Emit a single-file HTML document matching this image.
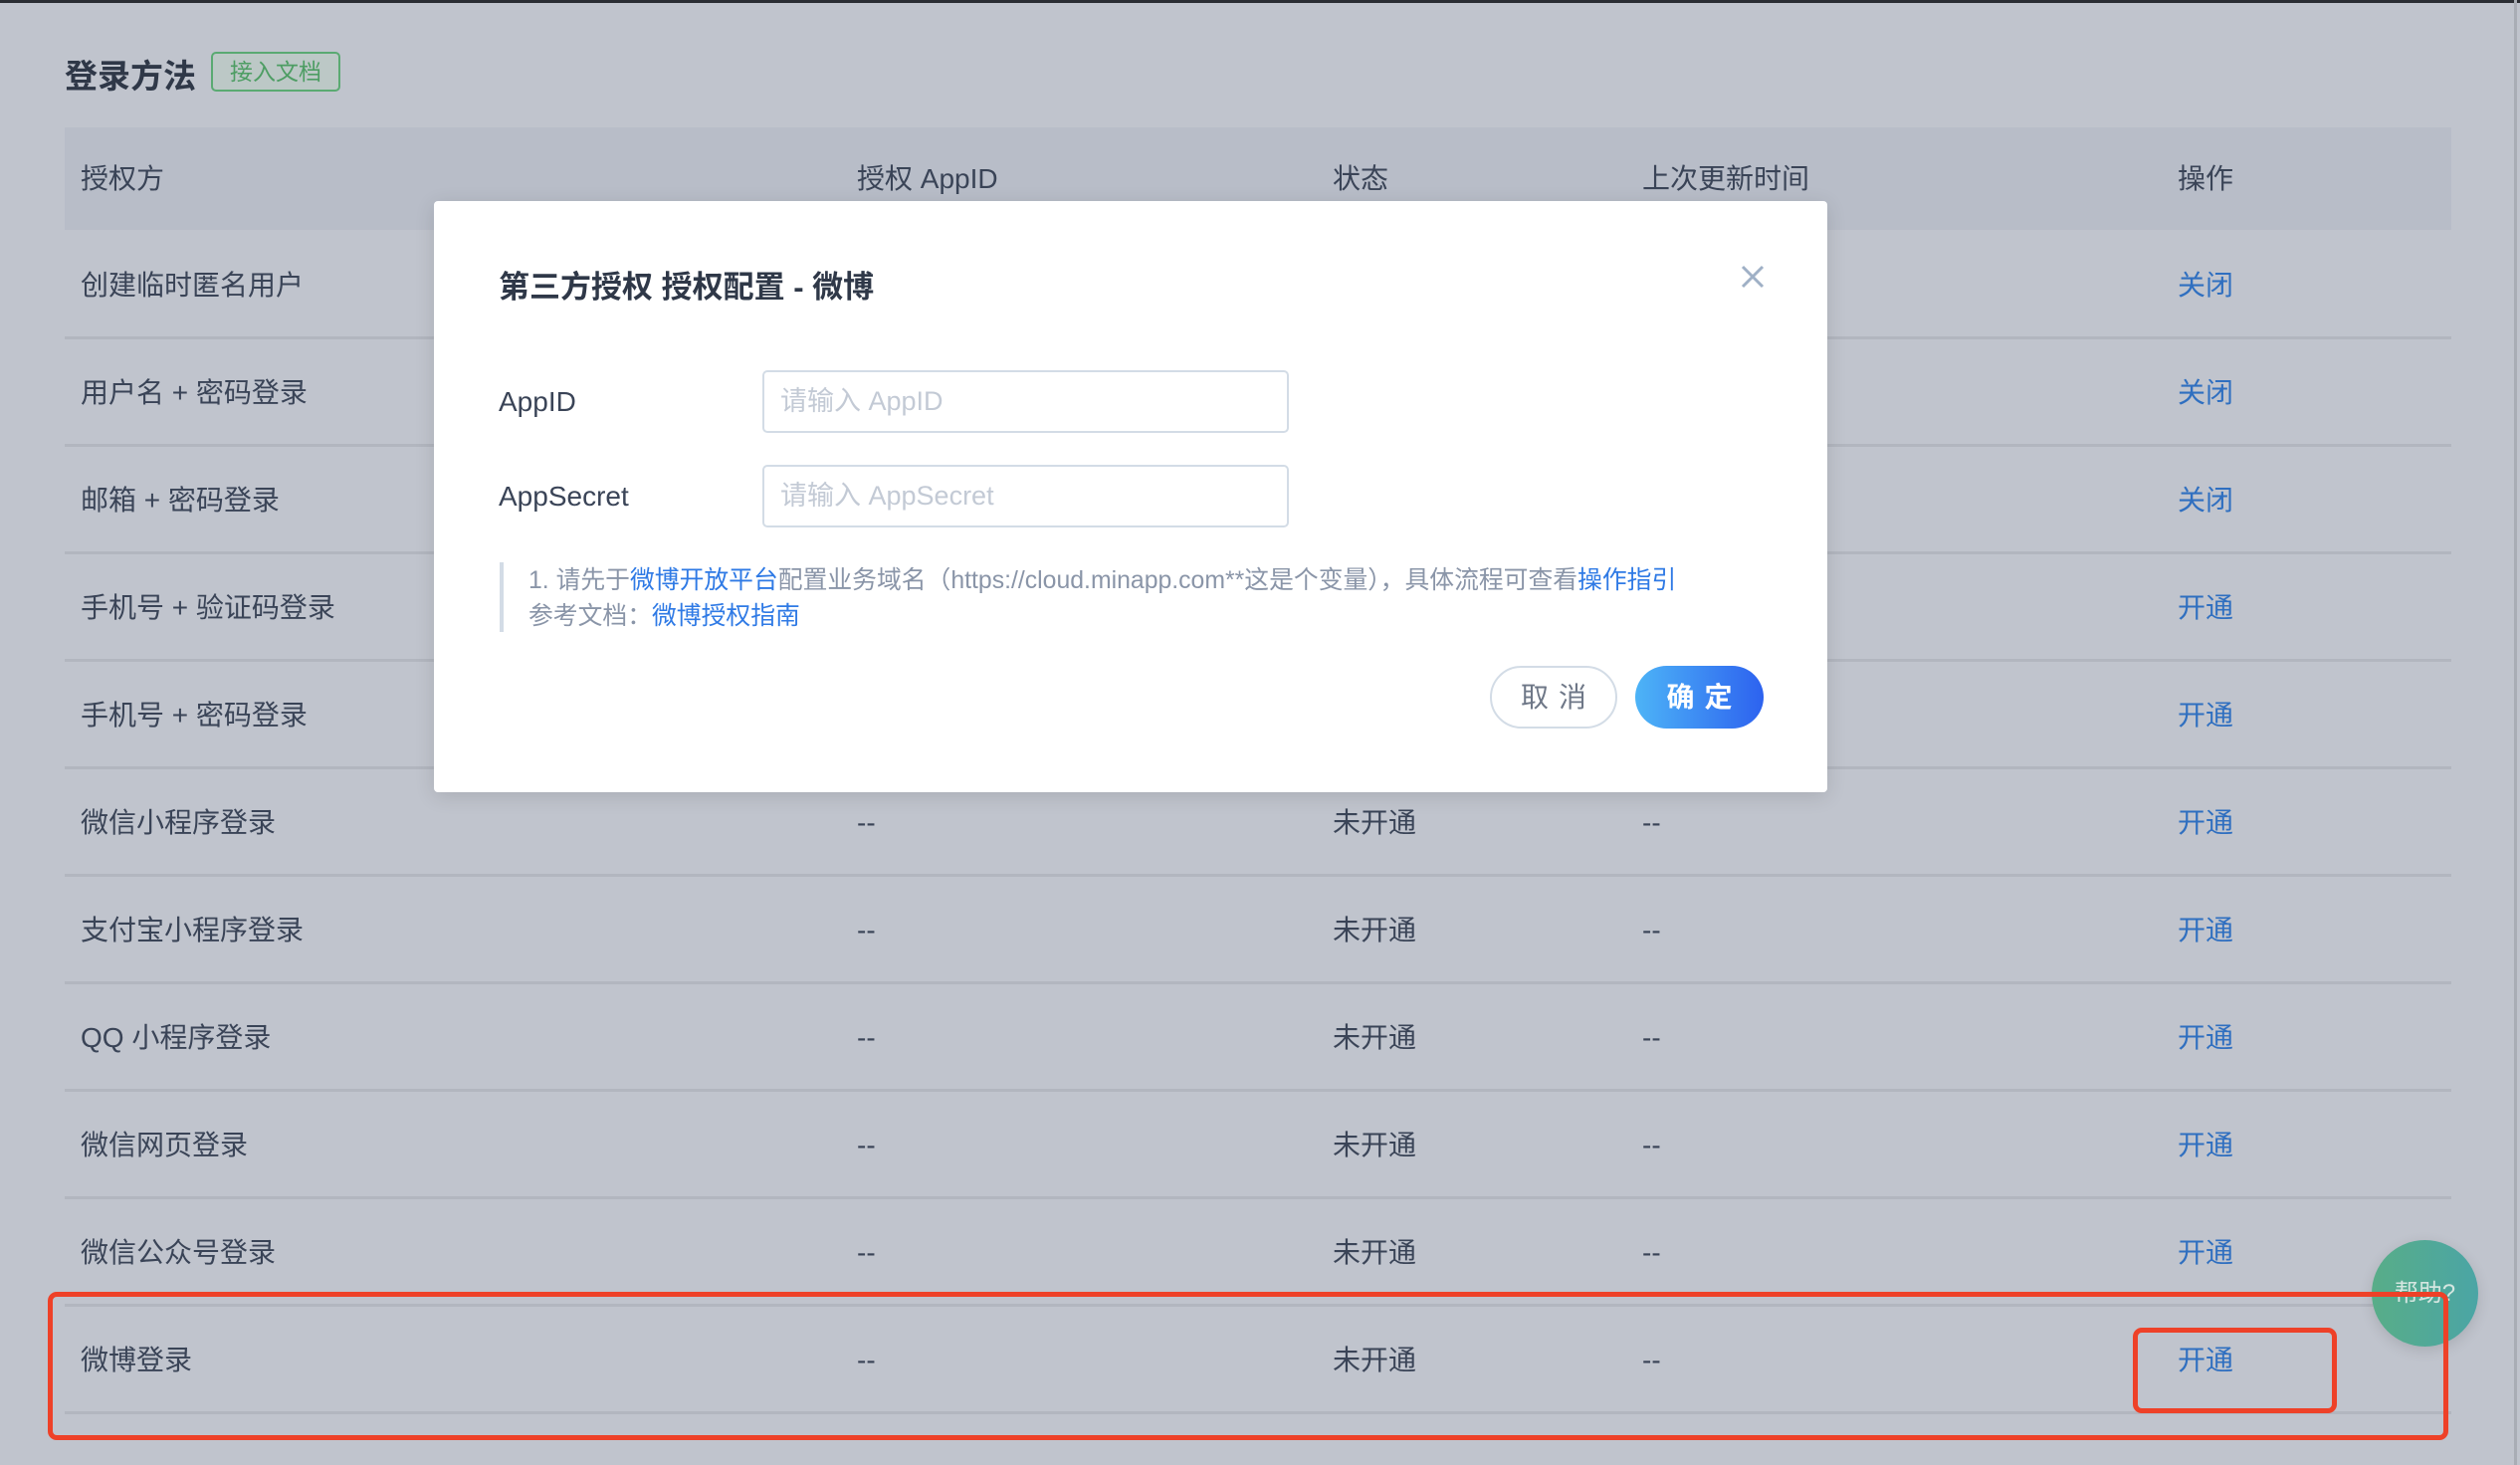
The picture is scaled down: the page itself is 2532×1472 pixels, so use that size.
<!DOCTYPE html>
<html><head><meta charset="utf-8"><style>
*{margin:0;padding:0;box-sizing:border-box}
body{width:2532px;height:1472px;background:#c0c4cd;position:relative;overflow:hidden;font-family:"Liberation Sans","Noto Sans CJK SC",sans-serif;color:#3a4457}
.abs{position:absolute}
.topbar{left:0;top:0;width:2532px;height:3px;background:#2a2d33}
.rline{left:2526px;top:0;width:3px;height:1472px;background:#a9adb5}
.title{left:65px;top:50px;font-size:33px;font-weight:bold;color:#2f3848}
.tag{left:212px;top:52px;width:130px;height:40px;border:2px solid #5aaa72;border-radius:5px;color:#4d9d63;font-size:23px;line-height:36px;text-align:center;background:#bcc8c6}
.head{left:65px;top:128px;width:2398px;height:103px;background:#b8bdc8}
.t{font-size:28px;line-height:32px;white-space:nowrap}
.line{left:65px;width:2398px;height:3px;background:#b2b6bf}
.link{color:#2f6fc0}
.modal{left:436px;top:202px;width:1400px;height:594px;background:#fff;border-radius:4px;box-shadow:0 4px 20px rgba(0,0,0,.12)}
.inp{width:529px;height:63px;border:2px solid #d3dce6;border-radius:5px;font-size:27px;color:#c3cad5;padding-left:16px;line-height:59px}
.btn{height:63px;border-radius:32px;font-size:28px;line-height:59px;text-align:center;letter-spacing:10px;text-indent:10px}
</style></head><body>
<div class="abs topbar"></div>
<div class="abs rline"></div>
<div class="abs title">登录方法</div>
<div class="abs tag">接入文档</div>
<div class="abs head"></div>
<div class="abs t" style="left:81px;top:164px">授权方</div>
<div class="abs t" style="left:861px;top:164px">授权 AppID</div>
<div class="abs t" style="left:1339px;top:164px">状态</div>
<div class="abs t" style="left:1650px;top:164px">上次更新时间</div>
<div class="abs t" style="left:2188px;top:164px">操作</div>

<div class="abs line" style="top:338px"></div>
<div class="abs line" style="top:446px"></div>
<div class="abs line" style="top:554px"></div>
<div class="abs line" style="top:662px"></div>
<div class="abs line" style="top:770px"></div>
<div class="abs line" style="top:878px"></div>
<div class="abs line" style="top:986px"></div>
<div class="abs line" style="top:1094px"></div>
<div class="abs line" style="top:1202px"></div>
<div class="abs line" style="top:1310px"></div>
<div class="abs line" style="top:1418px"></div>

<div class="abs t" style="left:81px;top:271px">创建临时匿名用户</div><div class="abs t link" style="left:2188px;top:271px">关闭</div>
<div class="abs t" style="left:81px;top:379px">用户名 + 密码登录</div><div class="abs t link" style="left:2188px;top:379px">关闭</div>
<div class="abs t" style="left:81px;top:487px">邮箱 + 密码登录</div><div class="abs t link" style="left:2188px;top:487px">关闭</div>
<div class="abs t" style="left:81px;top:595px">手机号 + 验证码登录</div><div class="abs t link" style="left:2188px;top:595px">开通</div>
<div class="abs t" style="left:81px;top:703px">手机号 + 密码登录</div><div class="abs t link" style="left:2188px;top:703px">开通</div>

<div class="abs t" style="left:81px;top:811px">微信小程序登录</div><div class="abs t" style="left:861px;top:811px">--</div><div class="abs t" style="left:1339px;top:811px">未开通</div><div class="abs t" style="left:1650px;top:811px">--</div><div class="abs t link" style="left:2188px;top:811px">开通</div>
<div class="abs t" style="left:81px;top:919px">支付宝小程序登录</div><div class="abs t" style="left:861px;top:919px">--</div><div class="abs t" style="left:1339px;top:919px">未开通</div><div class="abs t" style="left:1650px;top:919px">--</div><div class="abs t link" style="left:2188px;top:919px">开通</div>
<div class="abs t" style="left:81px;top:1027px">QQ 小程序登录</div><div class="abs t" style="left:861px;top:1027px">--</div><div class="abs t" style="left:1339px;top:1027px">未开通</div><div class="abs t" style="left:1650px;top:1027px">--</div><div class="abs t link" style="left:2188px;top:1027px">开通</div>
<div class="abs t" style="left:81px;top:1135px">微信网页登录</div><div class="abs t" style="left:861px;top:1135px">--</div><div class="abs t" style="left:1339px;top:1135px">未开通</div><div class="abs t" style="left:1650px;top:1135px">--</div><div class="abs t link" style="left:2188px;top:1135px">开通</div>
<div class="abs t" style="left:81px;top:1243px">微信公众号登录</div><div class="abs t" style="left:861px;top:1243px">--</div><div class="abs t" style="left:1339px;top:1243px">未开通</div><div class="abs t" style="left:1650px;top:1243px">--</div><div class="abs t link" style="left:2188px;top:1243px">开通</div>
<div class="abs t" style="left:81px;top:1351px">微博登录</div><div class="abs t" style="left:861px;top:1351px">--</div><div class="abs t" style="left:1339px;top:1351px">未开通</div><div class="abs t" style="left:1650px;top:1351px">--</div><div class="abs t link" style="left:2188px;top:1351px">开通</div>

<div class="abs" style="left:2383px;top:1246px;width:107px;height:107px;border-radius:50%;background:linear-gradient(90deg,#58ad88,#4ba5a5);box-shadow:0 4px 14px rgba(0,0,0,.12);color:#d4e6e0;font-size:24px;line-height:107px;text-align:center">帮助?</div>

<div class="abs" style="left:48px;top:1298px;width:2412px;height:149px;border:5px solid #ee4128;border-radius:9px"></div>
<div class="abs" style="left:2143px;top:1334px;width:205px;height:86px;border:5px solid #ee4128;border-radius:9px"></div>

<div class="abs modal">
  <div class="abs" style="left:65px;top:61px;font-size:31px;font-weight:bold;color:#2f3848;white-space:nowrap">第三方授权 授权配置 - 微博</div>
  <svg class="abs" style="left:1313px;top:64px" width="24" height="24" viewBox="0 0 24 24"><path d="M2 2L22 22M22 2L2 22" stroke="#9fb0c6" stroke-width="3"/></svg>
  <div class="abs t" style="left:65px;top:186px">AppID</div>
  <div class="abs inp" style="left:330px;top:170px">请输入 AppID</div>
  <div class="abs t" style="left:65px;top:281px">AppSecret</div>
  <div class="abs inp" style="left:330px;top:265px">请输入 AppSecret</div>
  <div class="abs" style="left:66px;top:363px;width:4px;height:70px;background:#d3dce6"></div>
  <div class="abs" style="left:95px;top:364px;font-size:24.8px;line-height:36px;color:#8a95a8;white-space:nowrap">1. 请先于<span style="color:#2f7ae5">微博开放平台</span>配置业务域名（https://cloud.minapp.com**这是个变量），具体流程可查看<span style="color:#2f7ae5">操作指引</span><br>参考文档：<span style="color:#2f7ae5">微博授权指南</span></div>
  <div class="abs btn" style="left:1061px;top:467px;width:128px;border:2px solid #d3dce6;color:#6e7787">取消</div>
  <div class="abs btn" style="left:1207px;top:467px;width:129px;background:linear-gradient(90deg,#4db4f7,#2d62ef);color:#fff;font-weight:bold;line-height:63px">确定</div>
</div>
</body></html>
